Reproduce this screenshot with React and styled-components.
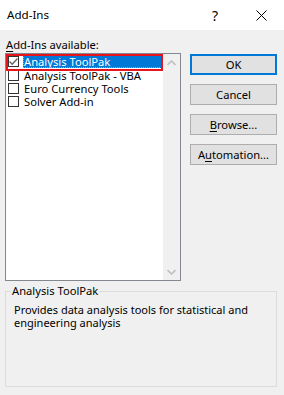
import React from 'react'
import styled, { createGlobalStyle, css } from 'styled-components'

const GlobalStyle = createGlobalStyle`
  html, body {
    margin: 0;
    padding: 0;
    background: #f0f0f0;
  }
  body {
    font-family: "Noto Sans", "Open Sans", sans-serif;
    font-size: 11.2px;
    color: #000;
  }
`

const Dialog = styled.div`
  width: 284px;
  height: 395px;
  background: #f0f0f0;
  display: flex;
  flex-direction: column;
  overflow: hidden;
`

const TitleBar = styled.div`
  height: 30px;
  background: #fff;
  display: flex;
  align-items: center;
`

const Title = styled.div`
  flex: 1;
  padding-left: 7px;
  font-size: 11.6px;
  padding-bottom: 1px;
`

const TitleButton = styled.div`
  width: 46px;
  height: 30px;
  display: flex;
  align-items: center;
  justify-content: center;
  font-size: 14px;
`

const Body = styled.div`
  padding: 7px 5px 0 5px;
  display: flex;
  flex-direction: column;
`

const Label = styled.div`
  height: 16px;
  line-height: 16px;
  font-size: 11.2px;
  padding-left: 1px;
`

const U = styled.span`
  text-decoration: underline;
  text-underline-offset: 2px;
`

const Main = styled.div`
  display: flex;
  align-items: flex-start;
  gap: 9px;
`

const ListBox = styled.div`
  width: 176px;
  height: 228px;
  box-sizing: border-box;
  border: 1px solid #828790;
  background: #fff;
  display: flex;
`

const Items = styled.div`
  flex: 1;
  padding-top: 1px;
  display: flex;
  flex-direction: column;
`

const Item = styled.div`
  position: relative;
  height: 13.4px;
  display: flex;
  align-items: center;
  padding-left: 2px;
  ${p => p.$marked && css`
    &::after {
      content: "";
      position: absolute;
      left: 0;
      top: -1px;
      right: 0;
      bottom: -3px;
      border: 2px solid #e8141c;
      pointer-events: none;
      z-index: 2;
    }
  `}
`

const Check = styled.span`
  width: 11px;
  height: 11px;
  box-sizing: border-box;
  border: 1px solid #333;
  background: #fff;
  display: flex;
  align-items: center;
  justify-content: center;
  margin-right: 4px;
  flex: none;
`

const ItemText = styled.span`
  flex: 1;
  height: 100%;
  display: flex;
  align-items: center;
  padding-left: 1px;
  margin-right: 1px;
  line-height: 13px;
  white-space: nowrap;
  ${p => p.$selected && css`
    background: #0078d7;
    color: #fff;
    outline: 1px dotted #f39c2c;
    outline-offset: -1px;
  `}
`

const ScrollBar = styled.div`
  width: 17px;
  background: #f0f0f0;
  display: flex;
  flex-direction: column;
  justify-content: space-between;
  align-items: center;
`

const Arrow = styled.div`
  width: 17px;
  height: 17px;
  display: flex;
  align-items: center;
  justify-content: center;
`

const Buttons = styled.div`
  display: flex;
  flex-direction: column;
  gap: 9px;
  padding-top: 1px;
`

const Button = styled.div`
  width: 87px;
  height: 21px;
  box-sizing: border-box;
  border: 1px solid #adadad;
  background: #e1e1e1;
  display: flex;
  align-items: center;
  justify-content: center;
  font-size: 11.2px;
  ${p => p.$default && css`
    border: 2px solid #0078d7;
  `}
`

const Group = styled.fieldset`
  margin: 2px 0 0 0;
  width: 272px;
  height: 104px;
  box-sizing: border-box;
  border: 1px solid #dcdcdc;
  padding: 4px 8px 0 8px;
  min-width: 0;
`

const Legend = styled.legend`
  padding: 0 1px;
  margin-left: -3px;
  font-size: 11.2px;
  line-height: 16px;
`

const Desc = styled.div`
  font-size: 11px;
  line-height: 13.4px;
`

const items = [
  { name: 'Analysis ToolPak', checked: true },
  { name: 'Analysis ToolPak - VBA' },
  { name: 'Euro Currency Tools' },
  { name: 'Solver Add-in' },
]

export default function App() {
  return (
    <Dialog>
      <GlobalStyle />
      <TitleBar>
        <Title>Add-Ins</Title>
        <TitleButton>?</TitleButton>
        <TitleButton>
          <svg width="11" height="11" viewBox="0 0 11 11">
            <path d="M0.5 0.5 L10.5 10.5 M10.5 0.5 L0.5 10.5" stroke="#000" strokeWidth="1" fill="none" />
          </svg>
        </TitleButton>
      </TitleBar>
      <Body>
        <Label><U>A</U>dd-Ins available:</Label>
        <Main>
          <ListBox>
            <Items>
              {items.map((it, i) => (
                <Item key={it.name} $marked={i === 0}>
                  <Check>
                    {it.checked && (
                      <svg width="9" height="9" viewBox="0 0 9 9">
                        <path d="M0.5 4.5 L3.2 7.2 L8.5 1.5" stroke="#666" strokeWidth="1.4" fill="none" />
                      </svg>
                    )}
                  </Check>
                  <ItemText $selected={i === 0}>{it.name}</ItemText>
                </Item>
              ))}
            </Items>
            <ScrollBar>
              <Arrow>
                <svg width="9" height="6" viewBox="0 0 9 6">
                  <path d="M0.5 5 L4.5 1 L8.5 5" stroke="#bfbfbf" strokeWidth="1.6" fill="none" />
                </svg>
              </Arrow>
              <Arrow>
                <svg width="9" height="6" viewBox="0 0 9 6">
                  <path d="M0.5 1 L4.5 5 L8.5 1" stroke="#bfbfbf" strokeWidth="1.6" fill="none" />
                </svg>
              </Arrow>
            </ScrollBar>
          </ListBox>
          <Buttons>
            <Button $default>OK</Button>
            <Button>Cancel</Button>
            <Button><U>B</U>rowse...</Button>
            <Button>A<U>u</U>tomation...</Button>
          </Buttons>
        </Main>
        <Group>
          <Legend>Analysis ToolPak</Legend>
          <Desc>Provides data analysis tools for statistical and engineering analysis</Desc>
        </Group>
      </Body>
    </Dialog>
  )
}
